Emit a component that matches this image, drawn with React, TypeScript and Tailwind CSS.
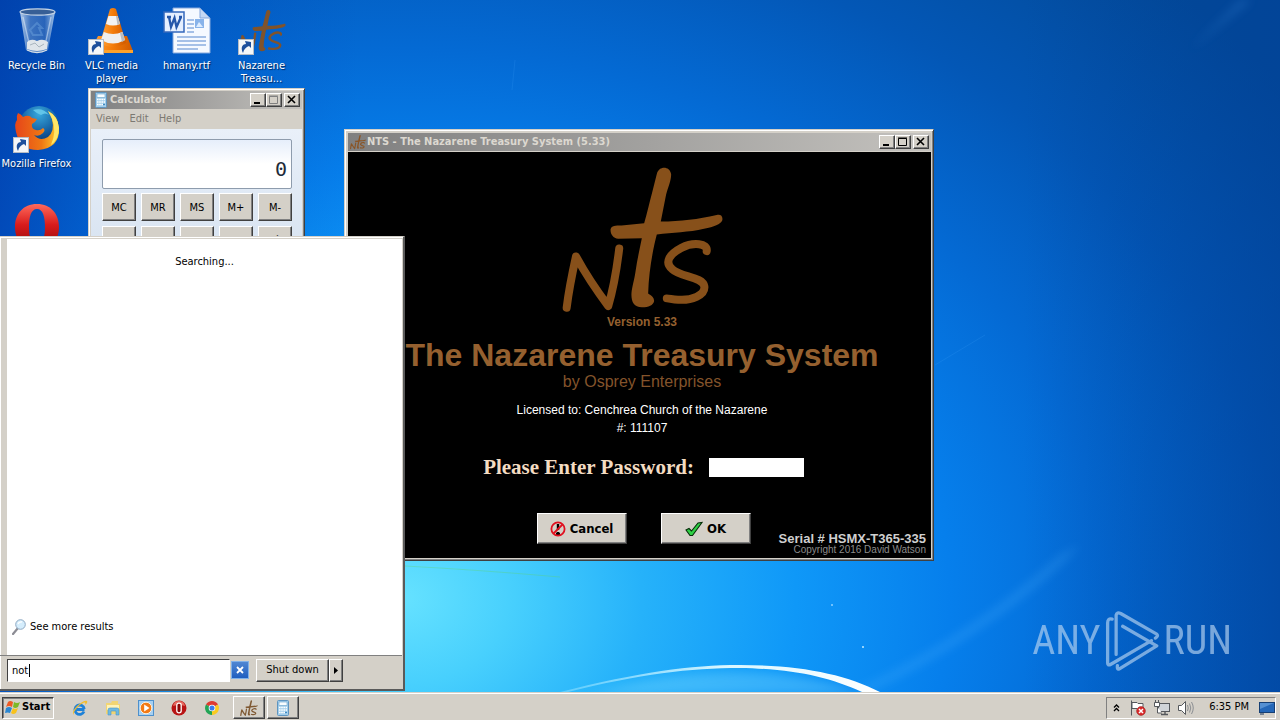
import type { ReactNode } from "react";

const UI_FONT = "font-['DejaVu_Sans_Condensed','DejaVu_Sans',sans-serif]";
const RAISED =
  "border border-t-white border-l-white border-r-[#404040] border-b-[#404040] bg-[#d4d0c8] shadow-[inset_-1px_-1px_0_#808080]";

function Wallpaper() {
  return (
    <svg className="absolute inset-0 h-full w-full" viewBox="0 0 1280 720" preserveAspectRatio="none" aria-hidden="true">
      <defs>
        <radialGradient id="sky" gradientUnits="userSpaceOnUse" cx="400" cy="600" r="1100" gradientTransform="translate(0 130) scale(1 0.78)">
          <stop offset="0" stopColor="#66e2ff" />
          <stop offset="0.1" stopColor="#48d0fd" />
          <stop offset="0.22" stopColor="#26b2fa" />
          <stop offset="0.36" stopColor="#0f98f8" />
          <stop offset="0.5" stopColor="#067fec" />
          <stop offset="0.64" stopColor="#046ad4" />
          <stop offset="0.8" stopColor="#0357b6" />
          <stop offset="1" stopColor="#034a98" />
        </radialGradient>
        <linearGradient id="leftShade" x1="0" y1="0" x2="1" y2="0">
          <stop offset="0" stopColor="#0038a8" stopOpacity="0.7" />
          <stop offset="0.12" stopColor="#0048b8" stopOpacity="0.4" />
          <stop offset="0.28" stopColor="#0048b8" stopOpacity="0" />
        </linearGradient>
        <linearGradient id="rightShade" x1="0" y1="0" x2="1" y2="0">
          <stop offset="0.8" stopColor="#003f98" stopOpacity="0" />
          <stop offset="1" stopColor="#003f98" stopOpacity="0.5" />
        </linearGradient>
        <linearGradient id="arc" x1="0" y1="0" x2="1" y2="0">
          <stop offset="0" stopColor="#8fe0ff" stopOpacity="0.5" />
          <stop offset="0.5" stopColor="#d8f6ff" />
          <stop offset="1" stopColor="#ffffff" />
        </linearGradient>
        <filter id="soft" x="-20%" y="-50%" width="140%" height="200%">
          <feGaussianBlur stdDeviation="5" />
        </filter>
      </defs>
      <rect width="1280" height="720" fill="url(#sky)" />
      <rect width="1280" height="720" fill="url(#leftShade)" />
      <rect width="1280" height="720" fill="url(#rightShade)" />
      <path d="M870 692 C960 650 1040 590 1080 545 L1060 555 C1010 600 940 650 850 692Z" fill="#59b8ff" opacity="0.22" filter="url(#soft)" />
      <path d="M1190 50 L1240 0 L1252 0Z" fill="#3f8fe0" opacity="0.25" filter="url(#soft)" />
      <path d="M590 694 C680 668 780 662 862 694Z" fill="#8fe4ff" opacity="0.3" filter="url(#soft)" />
      <path d="M560 692 C640 672 690 665 740 665 C800 665 845 674 880 692 L862 692 C828 677 795 669 740 668 C690 668 640 674 568 692Z" fill="url(#arc)" />
      <path d="M405 566 Q480 570 560 577" stroke="#5fd36a" strokeOpacity="0.35" fill="none" />
      <path d="M515 60 L512 90 M935 365 L985 335" stroke="#4fb0ff" strokeOpacity="0.15" fill="none" />
      <circle cx="863" cy="647" r="1" fill="#bfeaff" />
      <circle cx="832" cy="605" r="1" fill="#8fd0ff" />
    </svg>
  );
}

function NtsMark({ className, color = "#87501a", heavy = false }: { className: string; color?: string; heavy?: boolean }) {
  return (
    <svg className={className} viewBox="40 15 490 445" aria-hidden="true">
      <path
        fill={color}
        d="M328 42C334 18 366 17 371 42C372 60 362 82 356 104L340 185C400 184 452 178 508 165C520 162 527 168 525 181C520 194 500 200 470 207C424 218 376 218 328 224C318 262 304 330 302 401C309 406 320 411 320 424C318 437 302 443 285 443C258 444 250 424 252 398C254 380 260 362 264 335C269 300 276 270 283 235L212 237C196 235 188 222 189 208C192 197 203 197 222 197L290 190C299 160 306 128 314 98Z"
      />
      <g fill="none" stroke={color} strokeWidth={heavy ? 34 : 24} strokeLinecap="round" strokeLinejoin="round">
        <path d="M57 444C63 395 74 340 85 290C115 345 145 390 182 439C198 385 208 325 215 266" />
        <path d="M478 274C482 250 438 246 402 264C366 283 350 307 374 328C400 353 466 350 471 380C474 408 430 422 396 420C378 421 367 416 358 416" />
      </g>
    </svg>
  );
}

function ShortcutBadge() {
  return (
    <svg className="absolute bottom-0 left-0 h-4 w-4" viewBox="0 0 16 16" aria-hidden="true">
      <rect x="0.5" y="0.5" width="15" height="15" fill="#f4f6f8" stroke="#b6bcc4" />
      <path d="M5 14C2 8 5 5 8 5L7 2L13 3L13 9L11 7C8 8 6 10 5 14Z" fill="#1c4f9c" />
    </svg>
  );
}

function RecycleIcon() {
  return (
    <svg className="h-12 w-12" viewBox="0 0 48 48" aria-hidden="true">
      <defs>
        <linearGradient id="bin" x1="0" x2="1" y1="0" y2="0">
          <stop offset="0" stopColor="#d6e6f4" stopOpacity="0.85" />
          <stop offset="0.3" stopColor="#5585c5" stopOpacity="0.7" />
          <stop offset="0.7" stopColor="#3a70bc" stopOpacity="0.7" />
          <stop offset="1" stopColor="#c3dbf2" stopOpacity="0.85" />
        </linearGradient>
      </defs>
      <path d="M7 5L13 43Q24 48 35 43L42 5Z" fill="url(#bin)" />
      <ellipse cx="24.5" cy="5" rx="17.5" ry="3.2" fill="#375f96" stroke="#c4d4e6" strokeWidth="1.2" />
      <path d="M14 35Q18 31 24 34Q30 31 35 35L34 42Q24 46 14 42Z" fill="#dfe5ea" />
      <path d="M10 10L16 36M38 10L33 34" stroke="#e8f2fc" strokeWidth="1.3" opacity="0.5" />
      <path d="M19 21L24 16L29 21L26 21L29 28L20 28L17 23Z" fill="none" stroke="#6fa4de" strokeWidth="2" opacity="0.45" />
      <path d="M17 38L22 36L26 40L31 37" stroke="#a9b5be" fill="none" />
      <path d="M14 43Q24 48 34 43" stroke="#d5dee6" strokeWidth="1.3" fill="none" />
    </svg>
  );
}

function ConeIcon() {
  return (
    <svg className="h-12 w-12" viewBox="0 0 48 48" aria-hidden="true">
      <defs>
        <linearGradient id="cone" x1="0" x2="1">
          <stop offset="0" stopColor="#ffa33c" />
          <stop offset="0.5" stopColor="#f47c09" />
          <stop offset="1" stopColor="#cf5900" />
        </linearGradient>
      </defs>
      <path d="M10 29L39 29L45 44Q45 46 43 46L4 46Q2 46 3 43Z" fill="url(#cone)" />
      <path d="M3 43H45V46H3Z" fill="#ffa22a" />
      <path d="M22 2Q25 0 28 2L38 36Q25 44 12 36Z" fill="url(#cone)" />
      <path d="M20.4 9L29.6 9L32 17Q25 20 18 17Z" fill="#f2f2f2" />
      <path d="M15.8 25Q25 29 34.4 25L37 33Q25 40 13 33Z" fill="#eeeeee" />
      <path d="M28 9L29.6 9L32 17L29.5 18ZM32 26L34.4 25L37 33L34 35Z" fill="#b9bcc0" />
    </svg>
  );
}

function WordIcon() {
  return (
    <svg className="h-12 w-12" viewBox="0 0 48 48" aria-hidden="true">
      <path d="M10 1H37L47 11V46H10Z" fill="#f5f9ff" stroke="#84a7dc" />
      <path d="M37 1V11H47Z" fill="#c4d8f4" stroke="#84a7dc" />
      <path d="M24 13H31M24 17H31M24 21H31M24 25H31M14 30H43M14 34H43M14 38H43M14 42H35" stroke="#5687cf" strokeWidth="1.2" />
      <rect x="32" y="12" width="9" height="9" fill="#88b3ea" />
      <path d="M33 20L36 15L40 20Z" fill="#dcecff" />
      <rect x="1" y="5" width="20" height="20" fill="#e5efff" stroke="#3568bc" strokeWidth="1.5" />
      <path d="M4 10H8M6 10L8 20L11.5 11L13.5 20L18 10M16 10H19" fill="none" stroke="#2456aa" strokeWidth="2.3" />
    </svg>
  );
}

function FirefoxIcon() {
  return (
    <svg className="h-12 w-12" viewBox="0 0 48 48" aria-hidden="true">
      <defs>
        <radialGradient id="globe" cx="0.5" cy="0.2" r="0.8">
          <stop offset="0" stopColor="#39a9dd" />
          <stop offset="0.6" stopColor="#135c9f" />
          <stop offset="1" stopColor="#0b2c66" />
        </radialGradient>
        <linearGradient id="fox" x1="0" x2="1" y1="0" y2="0">
          <stop offset="0" stopColor="#e6451a" />
          <stop offset="0.6" stopColor="#ee7714" />
          <stop offset="1" stopColor="#ffd330" />
        </linearGradient>
      </defs>
      <circle cx="26" cy="21" r="20" fill="url(#globe)" />
      <path d="M20 5Q30 2 36 10Q32 7 28 10Q23 8 20 5Z" fill="#62c5e9" />
      <path d="M5 8Q8 9 10 12Q16 9 19 13L24 14Q22 18 19 19Q18 24 23 25Q27 26 30 23Q33 25 30 28Q26 32 21 30Q27 37 35 32Q42 26 39 14Q38 9 35 6Q45 11 46 23Q47 43 25 45Q7 45 3 27Q1 18 4 15Q3 11 5 8Z" fill="url(#fox)" />
      <path d="M35 6Q45 11 46 23Q46 34 38 40Q44 26 39 14Z" fill="#ffe768" />
    </svg>
  );
}

function OperaIcon({ className }: { className: string }) {
  return (
    <svg className={className} viewBox="0 0 48 48" aria-hidden="true">
      <defs>
        <linearGradient id="opera" x1="0" x2="0" y1="0" y2="1">
          <stop offset="0" stopColor="#ff6a5c" />
          <stop offset="0.45" stopColor="#d81c1c" />
          <stop offset="1" stopColor="#8d0505" />
        </linearGradient>
      </defs>
      <path fillRule="evenodd" fill="url(#opera)" d="M24 1C38 1 46 11 46 24S38 47 24 47S2 37 2 24S10 1 24 1ZM24 6C18 6 16 14 16 24S18 42 24 42S32 34 32 24S30 6 24 6Z" />
    </svg>
  );
}

function CalcIcon({ className }: { className: string }) {
  return (
    <svg className={className} viewBox="0 0 16 16" aria-hidden="true">
      <rect x="2.5" y="0.5" width="11" height="15" rx="1" fill="#a3cfec" stroke="#5f95c0" />
      <rect x="4" y="2" width="8" height="3.5" fill="#f8fdff" stroke="#6aa0c8" strokeWidth="0.6" />
      <path d="M4 7.5H12M4 10H12M4 12.5H12" stroke="#fff" strokeWidth="1.6" strokeDasharray="1.6 .6" />
      <path d="M10 12.5H12" stroke="#3f8ac2" strokeWidth="1.6" />
    </svg>
  );
}

function DesktopIcon({ label, shortcut, children }: { label: string; shortcut?: boolean; children?: ReactNode }) {
  return (
    <button className="flex h-[98px] w-[75px] flex-col items-center gap-1 pt-[7px] text-[11px] leading-[13px] text-white">
      <span className="relative block h-12 w-12">
        {children}
        {shortcut && <ShortcutBadge />}
      </span>
      <span className="w-[74px] text-center [text-shadow:1px_1px_1px_#00265c]">{label}</span>
    </button>
  );
}

function WindowButtons({ dimMax }: { dimMax?: boolean }) {
  const box = `flex h-[14px] w-4 items-center justify-center ${RAISED}`;
  return (
    <div className="flex">
      <button aria-label="Minimize" className={box}>
        <svg className="h-[10px] w-3" viewBox="0 0 12 10"><path d="M2 8H8" stroke="#000" strokeWidth="2" /></svg>
      </button>
      <button aria-label="Maximize" className={box}>
        <svg className="h-[10px] w-3" viewBox="0 0 12 10">
          <path d="M1.5 1.5H9.5V8.5H1.5ZM1 1H10" fill="none" stroke={dimMax ? "#808080" : "#000"} strokeWidth="1" />
        </svg>
      </button>
      <button aria-label="Close" className={`ml-[2px] ${box}`}>
        <svg className="h-[10px] w-3" viewBox="0 0 12 10"><path d="M2 1L9 8M9 1L2 8" stroke="#000" strokeWidth="1.6" /></svg>
      </button>
    </div>
  );
}

function TitleBar({ icon, title, dimMax }: { icon: ReactNode; title: string; dimMax?: boolean }) {
  return (
    <header className="flex h-[18px] items-center gap-px bg-linear-to-r from-[#808080] to-[#c4c2be] pr-[2px] pl-[2px]">
      {icon}
      <h2 className="flex-1 text-[11px] leading-[18px] font-bold text-[#dcd8d0]">{title}</h2>
      <WindowButtons dimMax={dimMax} />
    </header>
  );
}

const FRAME =
  "border border-[#d4d0c8] border-r-[#404040] border-b-[#404040] bg-[#d4d0c8] p-[2px] shadow-[inset_1px_1px_0_#fff,inset_-1px_-1px_0_#808080]";

function Calculator() {
  const keys = ["MC", "MR", "MS", "M+", "M-", "←", "CE", "C", "±", "√"];
  return (
    <section className={`absolute top-[88px] left-[88px] w-[217px] ${FRAME}`}>
      <TitleBar icon={<CalcIcon className="h-4 w-4" />} title="Calculator" dimMax />
      <nav className="flex h-5 items-center gap-[10px] px-[5px] text-[11px] text-[#7c7972]">
        <button>View</button>
        <button>Edit</button>
        <button>Help</button>
      </nav>
      <div className="bg-linear-to-b from-[#e9f0f9] to-[#d6e2f0] pt-[10px] pr-[10px] pb-3 pl-[11px]">
        <output className="flex h-[50px] items-end justify-end rounded-[2px] border border-[#8e9cad] bg-linear-to-b from-[#e6eefb] to-white to-50% px-1 pb-[7px] font-['DejaVu_Sans_Mono',monospace] text-[20px] leading-[24px] text-[#1e2b3a]">
          0
        </output>
        <div className="mt-1 grid grid-cols-5 gap-[5px]">
          {keys.map((k) => (
            <button key={k} className={`h-7 text-[11px] leading-[13px] text-black ${RAISED}`}>{k}</button>
          ))}
        </div>
      </div>
    </section>
  );
}

function LoginWindow() {
  return (
    <section className={`absolute top-[129px] left-[344px] w-[590px] ${FRAME}`}>
      <div className="pt-px pl-px">
        <TitleBar icon={<NtsMark className="h-4 w-4" color="#8a5526" heavy />} title="NTS - The Nazarene Treasury System (5.33)" />
        <div className="mt-px flex flex-col items-center bg-black pt-[13px] pl-[5px] font-['Liberation_Sans',Arial,sans-serif]">
          <NtsMark className="h-[148px] w-[163px]" />
          <p className="text-[12px] leading-[18px] font-bold text-[#95602f]">Version 5.33</p>
          <h1 className="pt-[5px] text-[32px] leading-[38px] font-bold whitespace-nowrap text-[#95602f]">The Nazarene Treasury System</h1>
          <p className="text-[16px] leading-4 text-[#84542b]">by Osprey Enterprises</p>
          <p className="pt-[11px] text-center text-[12px] leading-[18px] text-white">
            Licensed to: Cenchrea Church of the Nazarene
            <br />
            #: 111107
          </p>
          <div className="ml-[3px] flex items-center gap-[15px] pt-[18px]">
            <label htmlFor="password" className="font-['Liberation_Serif',serif] text-[21px] leading-6 font-bold text-[#f3dcc2]">
              Please Enter Password:
            </label>
            <input id="password" type="password" className="h-[19px] w-[95px] bg-white px-1 text-[12px] text-black outline-none" />
          </div>
          <div className={`mt-[34px] ml-[3px] flex gap-[34px] text-[13px] font-bold text-black ${UI_FONT}`}>
            <button className={`flex h-[31px] w-[90px] items-center justify-center gap-1 ${RAISED}`}>
              <svg className="h-4 w-4" viewBox="0 0 16 16" aria-hidden="true">
                <path d="M8 3V9M8 11V13M6 13H10" stroke="#000" strokeWidth="2.4" />
                <circle cx="8" cy="8" r="6.6" fill="none" stroke="#e01020" strokeWidth="1.8" />
                <path d="M3.5 12.5L12.5 3.5" stroke="#e01020" strokeWidth="1.8" />
              </svg>
              Cancel
            </button>
            <button className={`flex h-[31px] w-[90px] items-center justify-center gap-1 ${RAISED}`}>
              <svg className="h-4 w-[18px]" viewBox="0 0 18 16" aria-hidden="true">
                <path d="M1 9L4 7.5L6.5 10L13 2L17 1.5L7.5 14.5H5Z" fill="#2fd045" stroke="#052b08" strokeWidth="1.1" />
              </svg>
              OK
            </button>
          </div>
          <div className="-mt-3 self-end pr-[5px] pb-1 text-right">
            <p className="text-[13px] leading-[13px] font-bold text-[#cfcfcf]">Serial # HSMX-T365-335</p>
            <p className="text-[10px] leading-[9px] text-[#8c8c8c]">Copyright 2016 David Watson</p>
          </div>
        </div>
      </div>
    </section>
  );
}

function StartMenu() {
  return (
    <section className="absolute bottom-[29px] left-0 flex h-[455px] w-[405px] flex-col border-t border-r-2 border-b-2 border-[#d4d0c8] border-r-[#5a5a5a] border-b-[#5a5a5a] bg-[#d4d0c8] pt-px pr-px shadow-[inset_1px_1px_0_#fff]">
      <div className="ml-[7px] mt-px flex flex-1 flex-col justify-between bg-white pt-[15px] pb-[20px] text-[11px] leading-4 text-black">
        <p className="text-center">Searching...</p>
        <a href="#results" className="flex items-center gap-1 pl-[5px]">
          <svg className="h-4 w-[14px]" viewBox="0 0 14 16" aria-hidden="true">
            <path d="M1 15L6 9" stroke="#8c8c94" strokeWidth="2.2" strokeLinecap="round" />
            <circle cx="8.5" cy="5.5" r="4.8" fill="#d5edfc" stroke="#8fa9c2" />
            <path d="M6 5Q7 2.5 10 3" stroke="#fff" strokeWidth="1.4" fill="none" />
          </svg>
          See more results
        </a>
      </div>
      <div className="flex h-[34px] items-start border-t border-[#808080] pt-[3px] pl-[7px] text-[11px]">
        <div className="relative">
          <input
            aria-label="Search programs and files"
            defaultValue="not"
            className="h-[23px] w-[223px] border border-t-[#404040] border-r-white border-b-white border-l-[#404040] bg-white px-1 text-black outline-none"
          />
          <span className="absolute top-[5px] left-[22px] h-[13px] w-px bg-black" />
        </div>
        <button aria-label="Clear search" className="mt-[2px] ml-px flex h-[18px] w-[18px] items-center justify-center border border-[#7fb0e8] bg-linear-to-b from-[#4f86d2] to-[#1f5fc0]">
          <svg className="h-2 w-2" viewBox="0 0 8 8"><path d="M1 1L7 7M7 1L1 7" stroke="#fff" strokeWidth="1.8" /></svg>
        </button>
        <button className={`ml-[7px] h-[23px] w-[73px] ${RAISED}`}>Shut down</button>
        <button aria-label="Shut down options" className={`flex h-[23px] w-[14px] items-center justify-center ${RAISED}`}>
          <svg className="h-[7px] w-1" viewBox="0 0 4 7"><path d="M0 0L4 3.5L0 7Z" /></svg>
        </button>
      </div>
    </section>
  );
}

function Watermark() {
  return (
    <div className="absolute right-[48px] bottom-[48px] flex items-center gap-1 text-[#b9d5f2] opacity-65">
      <span className="font-['Liberation_Sans_Narrow','Roboto_Condensed',sans-serif] text-[40px] leading-[60px]">ANY</span>
      <svg className="h-[62px] w-[55px]" viewBox="0 0 168 186" fill="none" stroke="currentColor" strokeWidth="10" strokeLinejoin="round" strokeLinecap="round" aria-hidden="true">
        <path d="M22 26Q8 22 8 38V160Q8 170 18 164L142 92" />
        <path d="M34 134V14Q36 4 48 9L158 72Q164 78 154 84" />
        <path d="M54 48L158 108L44 178Q36 182 38 168" />
      </svg>
      <span className="font-['Liberation_Sans_Narrow','Roboto_Condensed',sans-serif] text-[40px] leading-[60px]">RUN</span>
    </div>
  );
}

function Taskbar() {
  const launch = "flex h-5 w-5 items-center justify-center";
  return (
    <footer className="absolute inset-x-0 bottom-0 flex h-7 items-center border-t border-[#d4d0c8] bg-[#d4d0c8] pt-[3px] pr-1 pb-px pl-[2px] text-[11px] text-black shadow-[inset_0_1px_0_#fff]">
      <button className="flex h-[22px] w-[52px] items-center gap-px border border-t-[#404040] border-r-white border-b-white border-l-[#404040] pl-[2px] text-[11px] font-bold shadow-[inset_1px_1px_0_#808080]">
        <svg className="h-4 w-4 shrink-0" viewBox="0 0 16 16" aria-hidden="true">
          <path d="M3 2Q5 0 8 2L7 7Q4 5 1 7Z" fill="#ee5a24" />
          <path d="M9 2Q12 4 15 2L13 7Q10 9 8 7Z" fill="#7db928" />
          <path d="M1 8Q4 6 7 8L5 13Q3 12 0 13Z" fill="#2b87d1" />
          <path d="M8 8Q10 10 13 8L11 13Q8 15 6 13Z" fill="#f8c21c" />
        </svg>
        Start
      </button>
      <nav className="ml-4 flex gap-[13px]">
        <button aria-label="Internet Explorer" className={launch}>
          <svg className="h-4 w-4" viewBox="0 0 16 16">
            <path d="M12.5 9.5H4.5M12.3 9A4.7 4.7 0 1 0 12 11.5" fill="none" stroke="#1f82d8" strokeWidth="2.8" />
            <path d="M2 15Q-1 12 5 6Q12 0 15 1Q16 3 13 5Q14 2 12 2.5Q8 4 4 9Q1 13 2 15Z" fill="#f3bd2d" />
          </svg>
        </button>
        <button aria-label="Windows Explorer" className={launch}>
          <svg className="h-4 w-4" viewBox="0 0 16 16">
            <path d="M1 3H6L7 1H13V4H15V14H1Z" fill="#f2d573" />
            <path d="M2 5H14V10H2Z" fill="#fff3b8" />
            <path d="M3 15V10Q3 8 5 8H12Q14 8 14 10V15H11V11H6V15Z" fill="#6eb9e3" stroke="#4a94c2" strokeWidth="0.6" />
          </svg>
        </button>
        <button aria-label="Media Player" className={launch}>
          <svg className="h-4 w-4" viewBox="0 0 16 16">
            <rect x="0.5" y="0.5" width="15" height="15" fill="#a7d0f1" stroke="#4d90cc" />
            <circle cx="8" cy="8" r="5.8" fill="#f37a15" stroke="#fff0d8" />
            <path d="M6.2 4.5L11.5 8L6.2 11.5Z" fill="#fff" />
          </svg>
        </button>
        <button aria-label="Opera" className={launch}>
          <svg className="h-4 w-4" viewBox="0 0 16 16">
            <circle cx="8" cy="8" r="7.5" fill="#b81414" />
            <path d="M2 6Q3 1 8 1T14 6Q8 4 2 6Z" fill="#e66a60" />
            <rect x="5.8" y="3.2" width="4.4" height="9.6" rx="2.1" fill="#8c0808" stroke="#fff" strokeWidth="1.3" />
          </svg>
        </button>
        <button aria-label="Chrome" className={launch}>
          <svg className="h-[14px] w-[14px]" viewBox="0 0 16 16">
            <path d="M8 8L1.1 4A8 8 0 0 1 14.9 4Z" fill="#df3b31" />
            <path d="M8 8L1.1 4A8 8 0 0 0 8 16Z" fill="#22a455" />
            <path d="M8 8L14.9 4A8 8 0 0 1 8 16Z" fill="#f9cb22" />
            <circle cx="8" cy="8" r="3.8" fill="#fff" />
            <circle cx="8" cy="8" r="2.9" fill="#3c7cec" />
          </svg>
        </button>
      </nav>
      <button aria-label="Nazarene Treasury System" className={`ml-[11px] flex h-[23px] w-8 items-center justify-center ${RAISED}`}>
        <NtsMark className="h-4 w-[18px]" color="#805a34" heavy />
      </button>
      <button aria-label="Calculator" className={`ml-[2px] flex h-[23px] w-8 items-center justify-center ${RAISED}`}>
        <CalcIcon className="h-4 w-4" />
      </button>
      <div className="ml-auto flex h-[22px] items-center border border-t-[#808080] border-r-white border-b-white border-l-[#808080] pl-[6px]">
        <button aria-label="Show hidden icons">
          <svg className="h-2 w-[7px]" viewBox="0 0 7 8"><path d="M1 3.5L3.5 1L6 3.5M1 7L3.5 4.5L6 7" fill="none" stroke="#000" strokeWidth="1.3" /></svg>
        </button>
        <button aria-label="Action Center" className="ml-[10px]">
          <svg className="h-4 w-4" viewBox="0 0 16 16">
            <path d="M1.5 0.5V15.5M2 2.5H7L8 3.5H13V9.5H8L7 8.5H2Z" fill="#fff" stroke="#55585c" />
            <circle cx="11" cy="11" r="4.4" fill="#da2a2a" stroke="#8d1515" strokeWidth="0.5" />
            <path d="M9 9L13 13M13 9L9 13" stroke="#fff" strokeWidth="1.5" />
          </svg>
        </button>
        <button aria-label="Network" className="ml-2">
          <svg className="h-4 w-4" viewBox="0 0 16 16">
            <rect x="4.5" y="3.5" width="11" height="8" fill="#d0d4d8" stroke="#55585c" />
            <path d="M7 14.5H14M11 12V14" stroke="#55585c" strokeWidth="1.4" />
            <path d="M0.5 2.5H5.5V6.5H0.5ZM1.5 0V2M4.5 0V2M3.5 7V13H8" fill="#fff" stroke="#55585c" />
          </svg>
        </button>
        <button aria-label="Volume" className="ml-2">
          <svg className="h-4 w-4" viewBox="0 0 16 16" fill="none" stroke="#55585c">
            <path d="M0.5 5.5H3.5L7.5 1.5V14.5L3.5 10.5H0.5Z" fill="#fff" />
            <path d="M9.5 5Q11 8 9.5 11M11.5 3.5Q14 8 11.5 12.5M13.5 2Q17 8 13.5 14" stroke="#8b8e92" />
          </svg>
        </button>
        <time className="ml-[15px]">6:35 PM</time>
        <button aria-label="Show desktop" className="ml-[10px]">
          <svg className="h-[14px] w-4" viewBox="0 0 16 14">
            <rect x="0.5" y="1.5" width="15" height="10" fill="#2467b8" stroke="#163f74" />
            <path d="M1 2H15L1 8Z" fill="#5590d2" />
            <path d="M1 13H5" stroke="#16345c" />
          </svg>
        </button>
      </div>
    </footer>
  );
}

export default function App() {
  return (
    <main className={`relative h-screen w-full overflow-hidden bg-[#0566c8] ${UI_FONT}`}>
      <Wallpaper />
      <div className="relative -ml-px grid w-fit grid-cols-[repeat(4,75px)]">
        <DesktopIcon label="Recycle Bin"><RecycleIcon /></DesktopIcon>
        <DesktopIcon label="VLC media player" shortcut><ConeIcon /></DesktopIcon>
        <DesktopIcon label="hmany.rtf"><WordIcon /></DesktopIcon>
        <DesktopIcon label="Nazarene Treasu..." shortcut><NtsMark className="h-12 w-12" color="#80532b" /></DesktopIcon>
        <div className="col-start-1"><DesktopIcon label="Mozilla Firefox" shortcut><FirefoxIcon /></DesktopIcon></div>
        <div className="col-start-1"><DesktopIcon label="Opera"><OperaIcon className="h-12 w-12" /></DesktopIcon></div>
      </div>
      <Watermark />
      <LoginWindow />
      <Calculator />
      <StartMenu />
      <Taskbar />
    </main>
  );
}
